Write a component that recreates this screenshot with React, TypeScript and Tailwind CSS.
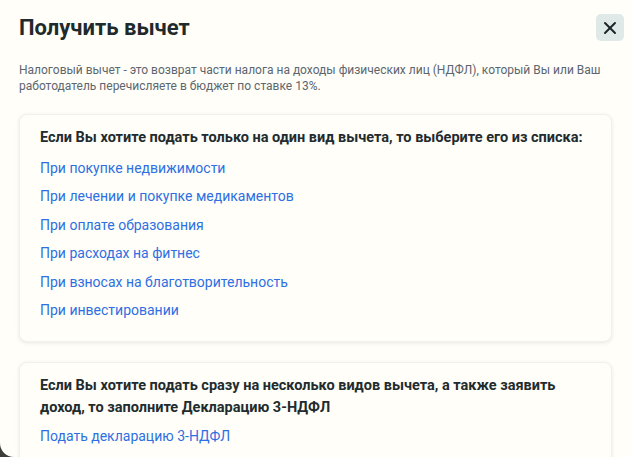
import React from 'react';
import { X } from 'lucide-react';

const singleOptions = [
  'При покупке недвижимости',
  'При лечении и покупке медикаментов',
  'При оплате образования',
  'При расходах на фитнес',
  'При взносах на благотворительность',
  'При инвестировании',
];

const Card = ({ title, links, tight }: { title: string; links: string[]; tight?: boolean }) => (
  <div className="bg-[#fffef8] rounded-lg shadow-[0_1px_4px_rgba(0,0,0,0.09)] border border-[#f1f2ee] pl-5 pr-4 pt-[12px] pb-[21px]">
    <p className="text-[14.5px] leading-[22px] font-bold text-[#222b2e]">{title}</p>
    <div className="flex flex-col">
      {links.map((l) => (
        <a
          key={l}
          href="#"
          className={`${tight ? 'mt-[7px]' : 'mt-[8.5px]'} text-[14px] leading-5 text-[#2e6fe2] w-fit`}
        >
          {l}
        </a>
      ))}
    </div>
  </div>
);

export default function App() {
  return (
    <div className="relative w-[632px] h-[457px] overflow-hidden bg-[#fffef8] font-['Roboto',sans-serif]">
      <div className="px-[19px] pt-[13px]">
        <div className="flex items-start justify-between">
          <h2 className="text-[22px] leading-[29px] font-bold text-[#1f2a2d]">Получить вычет</h2>
          <button className="mt-[1px] mr-[-11px] w-[28px] h-[27px] rounded-[5px] bg-[#dfe9e7] flex items-center justify-center text-[#1c2427]">
            <X className="w-[20px] h-[20px]" strokeWidth={2.4} />
          </button>
        </div>

        <p className="mt-[20px] text-[12px] leading-[16px] text-[#5c6670]">
          Налоговый вычет - это возврат части налога на доходы физических лиц (НДФЛ), который Вы или Ваш
          <br />
          работодатель перечисляете в бюджет по ставке 13%.
        </p>

        <div className="mt-[20px] mr-[1px] flex flex-col gap-[20px]">
          <Card
            title="Если Вы хотите подать только на один вид вычета, то выберите его из списка:"
            links={singleOptions}
          />
          <Card
            title="Если Вы хотите подать сразу на несколько видов вычета, а также заявить доход, то заполните Декларацию 3-НДФЛ"
            links={['Подать декларацию 3-НДФЛ']}
            tight
          />
        </div>
      </div>

      {/* dark corner of the page behind the dialog */}
      <svg className="absolute left-0 bottom-0" width="14" height="14" viewBox="0 0 14 14">
        <path d="M0 0 A14 14 0 0 0 14 14 L0 14 Z" fill="#3b3e3a" />
      </svg>
    </div>
  );
}
